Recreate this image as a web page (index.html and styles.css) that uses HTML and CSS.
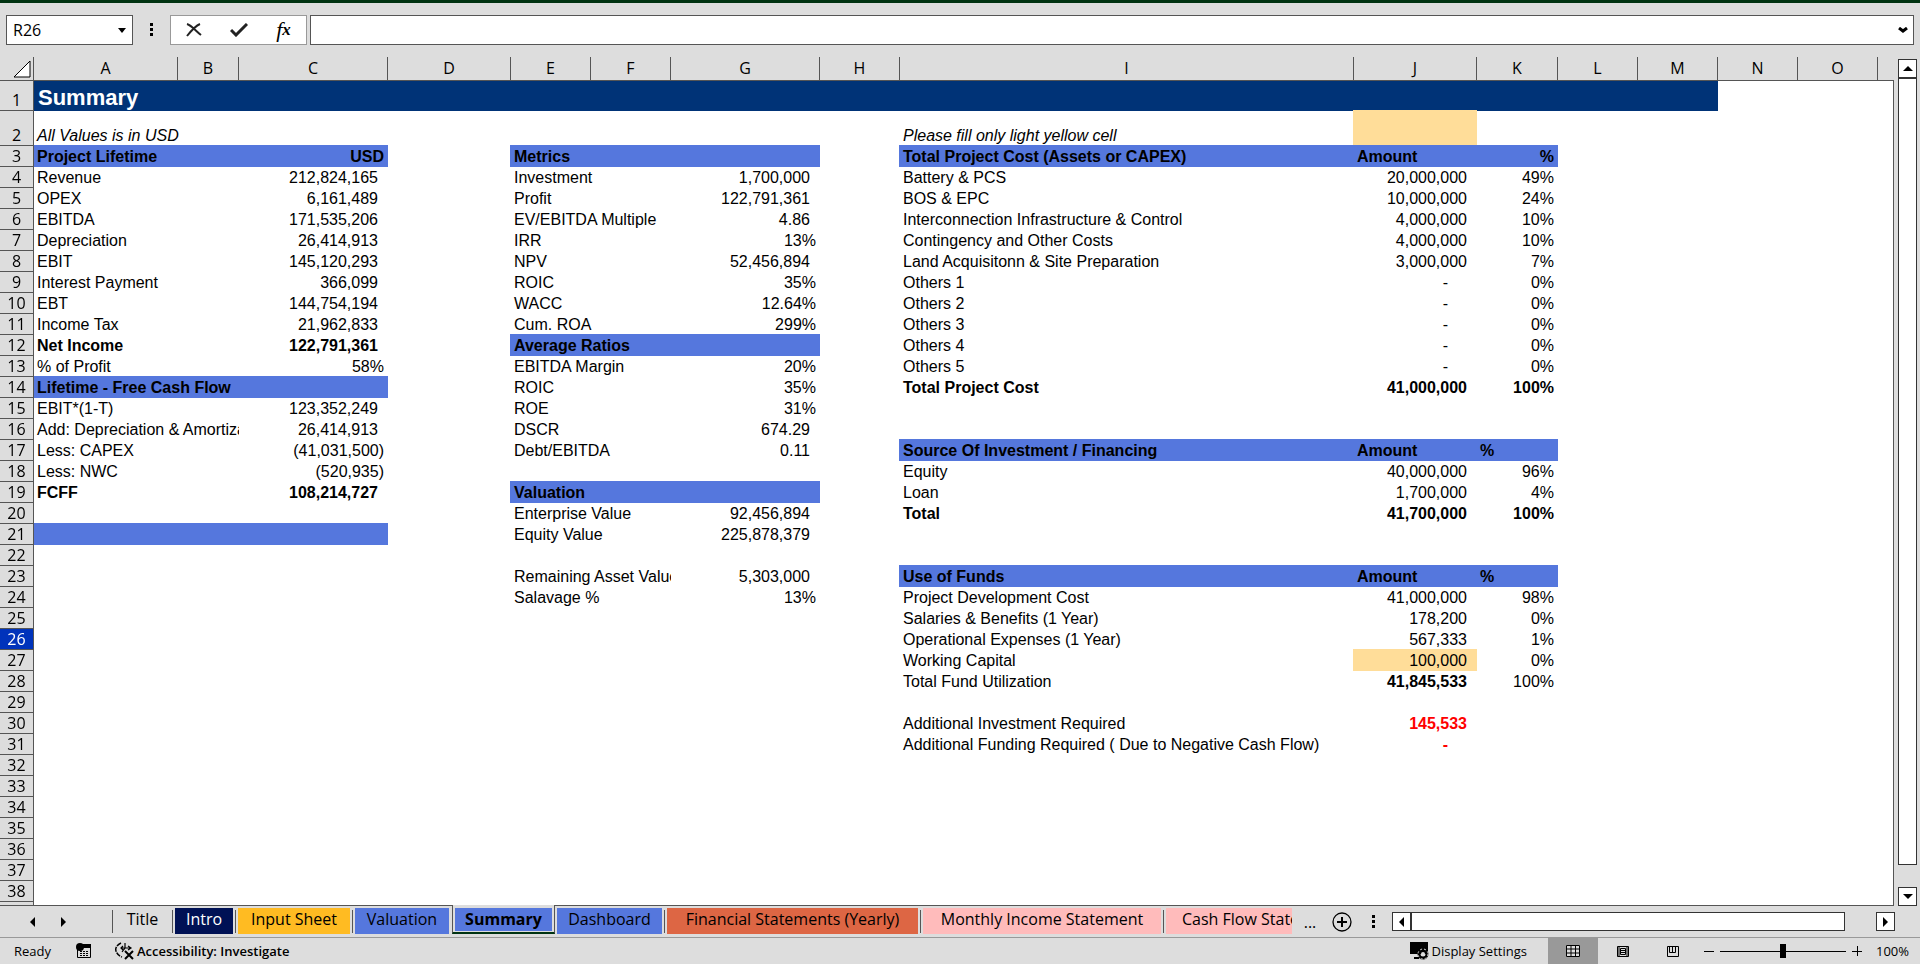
FILE: index.html
```html
<!DOCTYPE html>
<html lang="en">
<head>
    <meta charset="UTF-8">
    <title>Summary</title>
    <link rel="stylesheet" href="styles.css">
</head>
<body>
    <div class="app">
        <header class="formula-bar">
            <div class="name-box">
                <input type="text" value="R26" aria-label="Name box">
                <button aria-label="Named ranges"><svg width="8" height="5"><path d="M0 0h8L4 5z"/></svg></button>
            </div>
            <svg class="dots" width="4" height="14"><path d="M0 0h3v3H0zM0 5h3v3H0zM0 10h3v3H0z"/></svg>
            <div class="formula-tools">
                <button aria-label="Cancel"><svg width="16" height="14" fill="none" stroke="#222" stroke-width="2"><path d="M1 1c4 1 9 7 14 11M14 1C9 3 5 8 1 13"/></svg></button>
                <button aria-label="Enter"><svg width="18" height="14" fill="none" stroke="#222" stroke-width="3"><path d="M1 7l5 5L17 1"/></svg></button>
                <button class="fx" aria-label="Insert function">f<sub>x</sub></button>
            </div>
            <div class="formula-box">
                <input type="text" aria-label="Formula">
                <button aria-label="Expand formula bar"><svg width="10" height="6" fill="none" stroke="#000" stroke-width="3"><path d="M1 1l4 3 4-3"/></svg></button>
            </div>
        </header>

        <main class="workspace">
            <div class="grid">
                <table class="sheet">
                    <colgroup>
                        <col class="w-head"><col class="w-a"><col class="w-b"><col class="w-c"><col class="w-d">
                        <col class="w-std"><col class="w-std"><col class="w-c"><col class="w-std"><col class="w-i">
                        <col class="w-d"><col class="w-k"><col class="w-std"><col class="w-std"><col class="w-std">
                        <col class="w-std"><col>
                    </colgroup>
                    <thead><tr id="col-heads"></tr></thead>
                    <tbody id="rows"></tbody>
                </table>
            </div>
            <div class="vscroll">
                <button aria-label="Scroll up"><svg width="10" height="5"><path d="M0 5h10L5 0z"/></svg></button>
                <div class="vthumb"></div>
                <button aria-label="Scroll down"><svg width="10" height="5"><path d="M0 0h10L5 5z"/></svg></button>
            </div>
        </main>

        <nav class="tab-bar">
            <div class="tab-nav">
                <button aria-label="Previous sheet"><svg width="5" height="10"><path d="M5 0v10L0 5z"/></svg></button>
                <button aria-label="Next sheet"><svg width="5" height="10"><path d="M0 0v10l5-5z"/></svg></button>
            </div>
            <button class="tab tab-title"><span>Title</span></button>
            <button class="tab tab-intro"><span>Intro</span></button>
            <button class="tab tab-input"><span>Input Sheet</span></button>
            <button class="tab tab-valuation"><span>Valuation</span></button>
            <button class="tab tab-summary active"><span>Summary</span></button>
            <button class="tab tab-dashboard"><span>Dashboard</span></button>
            <button class="tab tab-financial"><span>Financial Statements (Yearly)</span></button>
            <button class="tab tab-monthly"><span>Monthly Income Statement</span></button>
            <button class="tab tab-cash"><span>Cash Flow State</span></button>
            <button class="more" aria-label="More sheets">...</button>
            <button class="add" aria-label="New sheet"><svg width="20" height="20" fill="none" stroke="#000"><circle cx="10" cy="10" r="9" stroke-width="1.3"/><path d="M5 10h10M10 5v10" stroke-width="2"/></svg></button>
            <svg class="dots" width="4" height="14"><path d="M0 0h3v3H0zM0 5h3v3H0zM0 10h3v3H0z"/></svg>
            <div class="hscroll">
                <button aria-label="Scroll left"><svg width="5" height="10"><path d="M5 0v10L0 5z"/></svg></button>
                <div class="hthumb"></div>
                <button aria-label="Scroll right"><svg width="5" height="10"><path d="M0 0v10l5-5z"/></svg></button>
            </div>
        </nav>

        <footer class="status-bar">
            <span class="ready">Ready</span>
            <button class="macro" aria-label="Record macro">
                <svg width="16" height="16"><circle cx="4" cy="4" r="4"/><path d="M6 1h9v4H6z"/><path d="M1.500 6v8.500h13V2" fill="none" stroke="#000"/><path d="M4 8.500h2m1 0h2m1 0h2M4 10.500h2m1 0h2m1 0h2M4 12.500h2m1 0h2m1 0h2" stroke="#000"/></svg>
            </button>
            <button class="access">
                <svg width="20" height="18" fill="none" stroke="#000"><path d="M6 1C2 3 0 6 1 9s3 5 6 6" stroke-width="1.500" stroke-dasharray="5 1"/><path d="M6 6h10M8 4L6 6l2 2M13 4l3 2-3 2M10 1v5l-3 4" stroke-width="1.200"/><path d="M10 9l8 8M18 9l-8 8" stroke-width="2"/></svg>
                Accessibility: Investigate
            </button>
            <button class="display">
                <svg width="19" height="18"><path d="M0 0h18v12H0zM4 15h5v2H4z"/><circle cx="13" cy="12" r="4" fill="none" stroke="#000" stroke-width="3"/><circle cx="13" cy="12" r="5" fill="none" stroke="#ddd" stroke-dasharray="2 2"/><circle cx="13" cy="12" r="2" fill="#ddd"/></svg>
                Display Settings
            </button>
            <button class="view selected" aria-label="Normal"><svg width="14" height="12"><path d="M0 0h14v12H0z" fill="#ddd"/><path d="M.5.500h13v11H.5zM0 4h14M0 8h14M5 0v12M9.500 0v12" fill="none" stroke="#000"/></svg></button>
            <button class="view" aria-label="Page layout"><svg width="12" height="11" fill="none" stroke="#000"><path d="M.5.500h11v10H.5zM3.500 2.500h5v6h-5zM4 4.500h4M4 6.500h4M2 1v9M10 1v9"/></svg></button>
            <button class="view" aria-label="Page break preview"><svg width="12" height="11" fill="none" stroke="#000"><path d="M.5.500h11v10H.5zM2.500 1v5.500h6V1M5.500 1v5.500"/></svg></button>
            <button class="zoom-btn" aria-label="Zoom out"><svg width="10" height="10"><path d="M0 5.500h10" stroke="#000"/></svg></button>
            <input class="zoom" type="range" min="10" max="190" value="100" aria-label="Zoom">
            <button class="zoom-btn" aria-label="Zoom in"><svg width="10" height="10"><path d="M0 5.500h10M5.500 0v10" stroke="#000"/></svg></button>
            <span class="percent">100%</span>
        </footer>
    </div>
    <script>
        const columns = "ABCDEFGHIJKLMNO".split("");

        // left block: row -> [label, value]
        const lifetime = {
            2: ["All Values is in USD", ""],
            3: ["Project Lifetime", "USD"],
            4: ["Revenue", "212,824,165"],
            5: ["OPEX", "6,161,489"],
            6: ["EBITDA", "171,535,206"],
            7: ["Depreciation", "26,414,913"],
            8: ["EBIT", "145,120,293"],
            9: ["Interest Payment", "366,099"],
            10: ["EBT", "144,754,194"],
            11: ["Income Tax", "21,962,833"],
            12: ["Net Income", "122,791,361"],
            13: ["% of Profit", "58%"],
            14: ["Lifetime - Free Cash Flow", ""],
            15: ["EBIT*(1-T)", "123,352,249"],
            16: ["Add: Depreciation & Amortization", "26,414,913"],
            17: ["Less: CAPEX", "(41,031,500)"],
            18: ["Less: NWC", "(520,935)"],
            19: ["FCFF", "108,214,727"],
            21: ["", ""]
        };

        const metrics = {
            3: ["Metrics", ""],
            4: ["Investment", "1,700,000"],
            5: ["Profit", "122,791,361"],
            6: ["EV/EBITDA Multiple", "4.86"],
            7: ["IRR", "13%"],
            8: ["NPV", "52,456,894"],
            9: ["ROIC", "35%"],
            10: ["WACC", "12.64%"],
            11: ["Cum. ROA", "299%"],
            12: ["Average Ratios", ""],
            13: ["EBITDA Margin", "20%"],
            14: ["ROIC", "35%"],
            15: ["ROE", "31%"],
            16: ["DSCR", "674.29"],
            17: ["Debt/EBITDA", "0.11"],
            19: ["Valuation", ""],
            20: ["Enterprise Value", "92,456,894"],
            21: ["Equity Value", "225,878,379"],
            23: ["Remaining Asset Value", "5,303,000"],
            24: ["Salavage %", "13%"]
        };

        // right block: row -> [label, amount, percent]
        const funding = {
            2: ["Please fill only light yellow cell", "", ""],
            3: ["Total Project Cost (Assets or CAPEX)", "Amount", "%"],
            4: ["Battery & PCS", "20,000,000", "49%"],
            5: ["BOS & EPC", "10,000,000", "24%"],
            6: ["Interconnection Infrastructure & Control", "4,000,000", "10%"],
            7: ["Contingency and Other Costs", "4,000,000", "10%"],
            8: ["Land Acquisitonn & Site Preparation", "3,000,000", "7%"],
            9: ["Others 1", "-", "0%"],
            10: ["Others 2", "-", "0%"],
            11: ["Others 3", "-", "0%"],
            12: ["Others 4", "-", "0%"],
            13: ["Others 5", "-", "0%"],
            14: ["Total Project Cost", "41,000,000", "100%"],
            17: ["Source Of Investment / Financing", "Amount", "%"],
            18: ["Equity", "40,000,000", "96%"],
            19: ["Loan", "1,700,000", "4%"],
            20: ["Total", "41,700,000", "100%"],
            23: ["Use of Funds", "Amount", "%"],
            24: ["Project Development Cost", "41,000,000", "98%"],
            25: ["Salaries & Benefits (1 Year)", "178,200", "0%"],
            26: ["Operational Expenses (1 Year)", "567,333", "1%"],
            27: ["Working Capital", "100,000", "0%"],
            28: ["Total Fund Utilization", "41,845,533", "100%"],
            30: ["Additional Investment Required", "145,533", ""],
            31: ["Additional Funding Required ( Due to Negative Cash Flow)", "-", ""]
        };

        // extra classes by cell
        const formats = {
            A2: "note", I2: "note", J2: "yellow", J27: "yellow",
            A12: "bold", C12: "bold", A19: "bold", C19: "bold",
            I14: "bold", J14: "bold", K14: "bold",
            I20: "bold", J20: "bold", K20: "bold",
            J28: "bold", J30: "bold red", J31: "bold red",
            C3: "right", K3: "right"
        };
        const bands = {
            A: [3, 14, 21], C: [3, 14, 21],
            E: [3, 12, 19], G: [3, 12, 19],
            I: [3, 17, 23], J: [3, 17, 23], K: [3, 17, 23]
        };

        function numberClass(text) {
            if (text === "-") return "dash";
            if (/[%)]$/.test(text)) return "right";
            return "num";
        }

        function cell(col, row, text = "", span = 1) {
            const classes = [];
            const isBand = bands[col] && bands[col].includes(row);
            if (isBand) classes.push("band");
            else if (text && "CGJK".includes(col)) classes.push(numberClass(text));
            if (formats[col + row]) classes.push(formats[col + row]);
            const label = text.replace("&", "&amp;");
            return `<td class="${classes.join(" ")}" colspan="${span}">${label}</td>`;
        }

        function renderRow(row) {
            const head = `<th scope="row" class="${row === 26 ? "current" : ""}">${row > 38 ? "" : row}</th>`;
            if (row === 1) {
                return `<tr class="title-row">${head}<td class="title" colspan="13">Summary</td><td colspan="3"></td></tr>`;
            }
            const left = lifetime[row] || [];
            const mid = metrics[row] || [];
            const right = funding[row] || [];
            return `<tr class="${row === 2 ? "note-row" : ""}">${head}
                ${cell("A", row, left[0], 2)}${cell("C", row, left[1])}<td></td>
                ${cell("E", row, mid[0], 2)}${cell("G", row, mid[1])}<td></td>
                ${cell("I", row, right[0])}${cell("J", row, right[1])}${cell("K", row, right[2])}
                <td colspan="5"></td></tr>`;
        }

        document.getElementById("col-heads").innerHTML =
            `<th class="corner"><svg width="18" height="18"><path d="M17 1v16H1z" fill="#fff" stroke="#000"/></svg></th>` +
            columns.map(c => `<th scope="col">${c}</th>`).join("") + `<th class="rest"></th>`;

        let html = "";
        for (let row = 1; row <= 39; row++) {
            html += renderRow(row);
        }
        document.getElementById("rows").innerHTML = html;
    </script>
</body>
</html>
```
FILE: styles.css
```css
* {
    box-sizing: border-box;
}
body {
    margin: 0;
    background: #fff;
    color: #000;
    font-family: "Open Sans", "Noto Sans", sans-serif;
    font-size: 16px;
}
button {
    display: flex;
    align-items: center;
    justify-content: center;
    padding: 0;
    border: none;
    background: none;
    color: inherit;
    font: inherit;
    white-space: nowrap;
}
.app {
    display: flex;
    flex-direction: column;
    height: calc(100vh - 2px);
    background: #ddd;
    border-top: 3px solid #003311;
}

/* formula bar */
.formula-bar {
    display: flex;
    align-items: center;
    padding: 12px 6px;
}
.name-box,
.formula-box {
    display: flex;
    height: 30px;
    background: #fff;
    border: 1px solid #555;
}
.name-box {
    width: 127px;
}
.name-box input,
.formula-box input {
    flex: 1;
    min-width: 0;
    padding: 0 6px;
    border: none;
    outline: none;
    background: none;
    font: inherit;
}
.name-box button,
.formula-box button {
    width: 20px;
}
.dots {
    flex: none;
    margin: 0 16px 0 17px;
}
.formula-tools {
    display: flex;
    justify-content: center;
    width: 137px;
    height: 30px;
    margin-right: 3px;
    background: #fff;
    border: 1px solid #999;
}
.formula-tools button {
    width: 45px;
}
.fx {
    font: italic 22px "Liberation Serif", serif;
}
.fx sub {
    font-size: 17px;
    font-weight: 700;
}
.formula-box {
    flex: 1;
}

/* sheet */
.workspace {
    flex: 1;
    display: flex;
    min-height: 0;
}
.grid {
    flex: 1;
    overflow: hidden;
    border-bottom: 1px solid #555;
}
.sheet {
    width: 100%;
    table-layout: fixed;
    border-collapse: separate;
    border-spacing: 0;
}
.w-head { width: 34px; }
.w-a { width: 144px; }
.w-b { width: 61px; }
.w-c { width: 149px; }
.w-d { width: 123px; }
.w-i { width: 454px; }
.w-k { width: 81px; }
.w-std { width: 80px; }

.sheet th {
    padding: 0;
    background: #ddd;
    border-right: 1px solid #555;
    border-bottom: 1px solid #555;
    font-weight: 400;
    line-height: 20px;
    vertical-align: bottom;
}
.sheet thead th {
    height: 24px;
    line-height: 23px;
}
.sheet thead .rest {
    border-right: none;
}
.sheet .corner {
    text-align: right;
}
.corner svg {
    display: block;
    margin: 0 2px 2px auto;
}
.sheet tbody th {
    position: sticky;
    left: 0;
    z-index: 1;
}
.sheet tbody .current {
    background: #0033bb;
    color: #fff;
}
.sheet td {
    height: 21px;
    padding: 0 2px 0 3px;
    background: #fff;
    overflow: hidden;
    font-family: "Liberation Sans", Arial, sans-serif;
    line-height: 21px;
    white-space: nowrap;
    vertical-align: bottom;
}
.sheet td:last-child {
    border-right: 1px solid #555;
}
.sheet .title-row td {
    height: 30px;
}
.sheet .note-row td {
    height: 35px;
}
.sheet .title {
    padding-left: 4px;
    background: #003377;
    color: #fff;
    font-size: 22px;
    font-weight: 700;
    line-height: 26px;
}
.sheet .band {
    background: #5577dd;
    box-shadow: -1px -1px 0 #5577dd, 0 -1px 0 #5577dd, -1px 0 0 #5577dd;
    font-weight: 700;
}
.sheet .yellow {
    background: #ffdd99;
    box-shadow: -1px -1px 0 #ffdd99, 0 -1px 0 #ffdd99, -1px 0 0 #ffdd99;
}
.sheet .note { font-style: italic; }
.sheet .bold { font-weight: 700; }
.sheet .red { color: #f00; }
.sheet .right,
.sheet .num,
.sheet .dash {
    text-align: right;
}
.sheet .right { padding-right: 4px; }
.sheet .num { padding-right: 10px; }
.sheet .dash { padding-right: 29px; }

.vscroll {
    display: flex;
    flex-direction: column;
    width: 26px;
    padding: 2px 3px 0 4px;
}
.vscroll button,
.hscroll button {
    flex: none;
    width: 19px;
    height: 19px;
    background: #fff;
    border: 1px solid #333;
}
.vthumb {
    flex: 1;
    margin-bottom: 22px;
    background: #fff;
    border: 1px solid #333;
}

/* sheet tabs */
.tab-bar {
    display: flex;
    height: 32px;
    border-bottom: 1px solid #999;
}
.tab-nav {
    display: flex;
    justify-content: center;
    gap: 26px;
    width: 113px;
    margin: 4px 0;
    padding-right: 16px;
    border-right: 1px solid #555;
}
.tab {
    position: relative;
    flex: none;
    padding: 2px;
    align-items: flex-start;
}
.tab::after {
    content: "";
    position: absolute;
    top: 4px;
    bottom: 4px;
    right: 0;
    border-right: 1px solid #555;
}
.tab span {
    width: 100%;
    height: 26px;
    margin-right: 1px;
    overflow: hidden;
    line-height: 23px;
}
.tab-title { width: 60px; }
.tab-intro { width: 63px; }
.tab-input { width: 117px; }
.tab-valuation { width: 99px; }
.tab-summary { width: 103px; }
.tab-dashboard { width: 110px; }
.tab-financial { width: 256px; }
.tab-monthly { width: 243px; }
.tab-cash { width: 131px; }
.tab-intro span { background: #001155; color: #fff; }
.tab-input span { background: #ffbb22; }
.tab-valuation span,
.tab-summary span,
.tab-dashboard span { background: #5577dd; }
.tab-financial span { background: #dd6644; }
.tab-monthly span,
.tab-cash span { background: #ffbbbb; }
.tab-cash span {
    padding-left: 16px;
    text-align: left;
}
.tab-valuation::after,
.tab-summary::after,
.tab-cash::after {
    display: none;
}
.tab.active {
    height: 29px;
    margin-top: -1px;
    padding-top: 3px;
    background: #ddd;
    border: 1px solid #555;
    border-top: none;
    border-bottom: 2px solid #003311;
    font-weight: 700;
}
.tab.active span {
    height: 23px;
    margin-right: 0;
}
.more {
    width: 30px;
}
.add {
    width: 34px;
}
.tab-bar .dots {
    margin: 9px 16px 0 13px;
}
.hscroll {
    flex: 1;
    display: flex;
    padding: 6px 25px 0 0;
}
.hthumb {
    flex: 1;
    height: 19px;
    margin-right: 31px;
    background: #fff;
    border: 1px solid #333;
}

/* status bar */
.status-bar {
    display: flex;
    align-items: center;
    height: 26px;
    padding: 0 11px 0 14px;
    font-size: 13px;
}
.macro {
    margin: 0 23px 0 25px;
}
.access {
    gap: 2px;
    font-weight: 600;
}
.display {
    gap: 2px;
    margin-left: auto;
    margin-right: 21px;
}
.view {
    width: 50px;
    height: 26px;
}
.view.selected {
    background: #999;
}
.zoom-btn {
    width: 22px;
}
.zoom {
    width: 126px;
    height: 14px;
    margin: 0;
    appearance: none;
    background: linear-gradient(#000, #000) center / 100% 1px no-repeat;
}
.zoom::-webkit-slider-thumb {
    appearance: none;
    width: 6px;
    height: 14px;
    background: #000;
}
.percent {
    margin-left: 8px;
}
```
